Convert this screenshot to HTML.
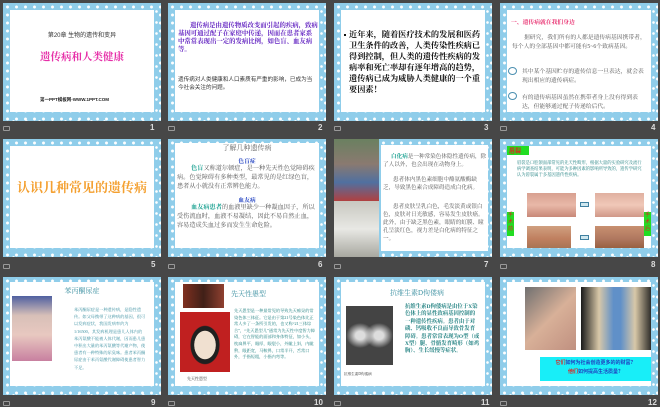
<!DOCTYPE html>
<html><head><meta charset="utf-8"><style>
*{margin:0;padding:0;box-sizing:border-box}
body{width:660px;height:406px;background:#474747;position:relative;overflow:hidden;font-family:"Liberation Sans","Noto Sans CJK SC",sans-serif}
.s{position:absolute;width:158px;height:118px;background-color:#8fcdea;
background-image:radial-gradient(circle,#fff 1.2px,transparent 1.8px),radial-gradient(circle,#fff 1px,transparent 1.6px);
background-size:9px 8px,13px 11px;background-position:0 0,4px 3px}
.in{position:absolute;left:7px;top:7px;right:7px;bottom:9px;background:#fff;overflow:hidden}
.n{position:absolute;color:#ddd;font-size:8px;font-weight:bold}
.ic{position:absolute;width:7px;height:5px;border:1px solid #999;border-radius:1px}
.t{position:absolute;font-family:"Liberation Serif","Noto Serif CJK SC",serif}
.p{position:absolute}
</style></head><body>

<!-- Row 1 -->
<div class="s" style="left:3px;top:3px"><div class="in">
<div class="t" style="left:0;right:0;top:20px;text-align:center;font-size:6px;color:#333;font-family:'Liberation Sans','Noto Sans CJK SC',sans-serif">第20章 生物的遗传和变异</div>
<div class="t" style="left:0;right:0;top:39px;text-align:center;font-size:10.5px;color:#e62fa8;font-weight:bold">遗传病和人类健康</div>
<div class="p" style="left:30px;top:87px;font-size:4.5px;color:#222;font-weight:bold">第一PPT模板网-WWW.1PPT.COM</div>
</div></div>
<div class="s" style="left:168px;top:3px"><div class="in">
<div class="t" style="left:3px;right:1px;top:12px;font-size:6.4px;line-height:8px;color:#6020c0;font-weight:bold;text-indent:12px">遗传病是由遗传物质改变而引起的疾病，致病基因可通过配子在家庭中传递，因而在患者家系中常常表现出一定的发病比例，如色盲、血友病等。</div>
<div class="p" style="left:3px;right:2px;top:66px;font-size:5.6px;line-height:8px;color:#333">遗传病对人类健康和人口素质有严重的影响，已成为当今社会关注的问题。</div>
</div></div>
<div class="s" style="left:334px;top:3px"><div class="in">
<div class="t" style="left:8px;right:3px;top:19px;font-size:8.2px;line-height:11px;color:#111;font-weight:bold">近年来，随着医疗技术的发展和医药卫生条件的改善，人类传染性疾病已得到控制，但人类的遗传性疾病的发病率和死亡率却有逐年增高的趋势，遗传病已成为威胁人类健康的一个重要因素！</div>
<div class="p" style="left:3px;top:24px;width:2px;height:2px;background:#111"></div>
</div></div>
<div class="s" style="left:500px;top:3px"><div class="in">
<div class="t" style="left:4px;top:7px;font-size:5.8px;color:#e83070;font-weight:bold">一、遗传病就在我们身边</div>
<div class="t" style="left:5px;right:2px;top:24px;font-size:5.8px;line-height:8.5px;color:#555;text-indent:12px">据研究，我们所有的人都是遗传病基因携带者，每个人的全部基因中都可能有5~6个致病基因。</div>
<div class="p" style="left:1px;top:57px;width:9px;height:8px;border:1px solid #4a8fb0;border-radius:50%"></div>
<div class="t" style="left:15px;right:2px;top:58px;font-size:5.8px;line-height:8.5px;color:#555">其中某个基因贮存的遗传信息一旦表达，就会表现出相应的遗传病症。</div>
<div class="p" style="left:1px;top:82px;width:9px;height:8px;border:1px solid #4a8fb0;border-radius:50%"></div>
<div class="t" style="left:15px;right:2px;top:84px;font-size:5.8px;line-height:8.5px;color:#555">有的遗传病基因虽然在携带者身上没有得到表达，但能够通过配子传递给后代。</div>
</div></div>

<!-- Row 2 -->
<div class="s" style="left:3px;top:139px"><div class="in">
<div class="t" style="left:0;right:0;top:31px;text-align:center;font-size:13px;color:#f4a030;font-weight:bold">认识几种常见的遗传病</div>
</div></div>
<div class="s" style="left:168px;top:139px"><div class="in" style="top:4px">
<div class="t" style="left:0;right:0;top:0;text-align:center;font-size:7px;color:#666">了解几种遗传病</div>
<div class="t" style="left:0;right:0;top:13px;text-align:center;font-size:5.8px;color:#2040c0;font-weight:bold">色盲症</div>
<div class="t" style="left:2px;right:1px;top:21px;font-size:6.2px;line-height:9px;color:#555;text-indent:14px"><b style="color:#18a090">色盲</b>又称道尔顿症，是一种先天性色觉障碍疾病。色觉障碍有多种类型，最常见的是红绿色盲，患者从小就没有正常辨色能力。</div>
<div class="t" style="left:0;right:0;top:52px;text-align:center;font-size:5.8px;color:#2040c0;font-weight:bold">血友病</div>
<div class="t" style="left:2px;right:1px;top:60px;font-size:6.2px;line-height:9px;color:#555;text-indent:14px"><b style="color:#18a090">血友病患者</b>的血液里缺少一种凝血因子，所以受伤流血时，血液不易凝结，因此不易自然止血，容易造成失血过多而发生生命危险。</div>
</div></div>
<div class="s" style="left:334px;top:139px">
<div class="p" style="left:0;top:0;width:45px;height:62px;background:linear-gradient(#6a8060,#8a7a70 40%,#5070a0 70%,#b04040)"></div>
<div class="p" style="left:0;top:62px;width:45px;height:56px;background:linear-gradient(#c8c8c0,#e8e8e4 50%,#a8a8a0)"></div>
<div class="in" style="left:47px;top:6px;right:4px;bottom:6px">
<div class="t" style="left:2px;right:1px;top:8px;font-size:5.6px;line-height:8px;color:#555;text-indent:8px"><b style="color:#18a090">白化病</b>是一种常染色体隐性遗传病，除了人以外，也会出现在动物身上。</div>
<div class="t" style="left:2px;right:1px;top:31px;font-size:5.6px;line-height:8px;color:#555;text-indent:10px">患者体内黑色素细胞中酪氨酸酶缺乏，导致黑色素合成障碍造成白化病。</div>
<div class="t" style="left:2px;right:1px;top:58px;font-size:5.6px;line-height:8px;color:#555;text-indent:10px">患者皮肤呈乳白色，毛发淡黄或银白色，皮肤对日光敏感，容易发生皮肤癌。此外，由于缺乏黑色素，眼睛的虹膜、瞳孔呈淡红色，视力差是白化病的特征之一。</div>
</div></div>
<div class="s" style="left:500px;top:139px"><div class="in">
<div class="p" style="left:0;top:0;width:22px;height:9px;background:#22dd22;color:#e02020;font-size:6px;font-weight:bold;padding-left:2px">唇裂</div>
<div class="t" style="left:10px;right:6px;top:14px;font-size:4.3px;line-height:5.8px;color:#208080">唇裂是口腔颌面部常见的先天性畸形，根据大量的实验研究及流行病学调查结果表明，可能为多种因素的影响所导致的，遗传学研究认为唇裂属于多基因遗传性疾病。</div>
<div class="p" style="left:20px;top:47px;width:49px;height:24px;background:linear-gradient(#d8a090,#e8b8a8 50%,#c88878)"></div>
<div class="p" style="left:88px;top:47px;width:49px;height:24px;background:linear-gradient(#e0b0a0,#f0c8b8 50%,#d09888)"></div>
<div class="p" style="left:20px;top:80px;width:44px;height:25px;background:linear-gradient(#d0a080,#c08060 50%,#a07050)"></div>
<div class="p" style="left:88px;top:80px;width:49px;height:25px;background:linear-gradient(#c89070,#b07860 50%,#905838)"></div>
<div class="p" style="left:73px;top:56px;width:9px;height:5px;border:1px solid #4080a0;background:#d0e8f0"></div>
<div class="p" style="left:73px;top:89px;width:9px;height:5px;border:1px solid #4080a0;background:#d0e8f0"></div>
<div class="p" style="left:0;top:66px;width:7px;height:24px;background:#22dd22;color:#e02020;font-size:5px;line-height:7px;text-align:center">手术前</div>
<div class="p" style="left:137px;top:66px;width:7px;height:24px;background:#22dd22;color:#e02020;font-size:5px;line-height:7px;text-align:center">手术后</div>
</div></div>

<!-- Row 3 -->
<div class="s" style="left:3px;top:277px"><div class="in" style="top:5px">
<div class="t" style="left:0;right:0;top:4px;text-align:center;font-size:7px;color:#3a8fa0">苯丙酮尿症</div>
<div class="p" style="left:2px;top:14px;width:40px;height:65px;background:linear-gradient(#5060a0,#d8c0b8 30%,#e8c8c0 60%,#c880a0)"></div>
<div class="t" style="left:64px;right:8px;top:24px;font-size:4.2px;line-height:7.2px;color:#3a8fa0">苯丙酮尿症是一种遗传病，是隐性遗传。如父母携带了这种病的基因，很可以发病症状，我国发病率约为1/16500。其发病机理是患儿人体内的苯丙氨酸不能被人体代谢，因而患儿患中积出大量的苯丙氨酸等代谢产物，使患者有一种特殊的尿臭味。患者苯丙酮尿症由于苯丙氨酸代谢障碍使患者智力不足。</div>
</div></div>
<div class="s" style="left:168px;top:277px"><div class="in" style="top:5px">
<div class="p" style="left:8px;top:2px;width:41px;height:24px;background:linear-gradient(90deg,#803020,#402018 50%,#904030)"></div>
<div class="t" style="left:56px;top:7px;font-size:7px;color:#3a8fa0">先天性愚型</div>
<div class="p" style="left:5px;top:30px;width:50px;height:60px;background:radial-gradient(ellipse at 50% 55%,#f0e0d0 30%,#202020 31%,#202020 40%,#c02020 42%)"></div>
<div class="t" style="left:12px;top:94px;font-size:4px;color:#333">先天性愚型</div>
<div class="t" style="left:59px;right:2px;top:26px;font-size:4.2px;line-height:6.6px;color:#208080">先天愚型是一种最常见的导致先天痴呆的常染色体三体征。它是由于第21号染色体比正常人多了一条所引发的，也又称“21三体综合”，“先天愚型儿”通常为先天性中度智力障碍，它在智能的面部和身体特征，如小头，枕扁鼻平，眼厚，眼裂小，外眦上斜，内眦赘，眼距宽，马鞍鼻，口常半开，舌常口外，手指短粗，小指内弯等。</div>
</div></div>
<div class="s" style="left:334px;top:277px"><div class="in" style="top:5px">
<div class="t" style="left:0;right:0;top:6px;text-align:center;font-size:7px;color:#3a8fa0;padding-left:8px">抗维生素D佝偻病</div>
<div class="p" style="left:5px;top:24px;width:47px;height:59px;background:radial-gradient(ellipse at 30% 50%,#ddd 10%,transparent 30%),radial-gradient(ellipse at 70% 50%,#ddd 10%,transparent 30%),#444"></div>
<div class="t" style="left:3px;top:90px;font-size:3.6px;color:#333">抗维生素D佝偻病</div>
<div class="t" style="left:64px;right:5px;top:22px;font-size:5.4px;line-height:7.4px;color:#208080;font-weight:bold">抗维生素D佝偻病是由位于X染色体上的显性致病基因控制的一种遗传性疾病。患者由于对磷、钙吸收不良而导致骨发育障碍。患者常常表现为O型（或X型）腿、骨骼发育畸形（如鸡胸）、生长缓慢等症状。</div>
</div></div>
<div class="s" style="left:500px;top:277px"><div class="in" style="top:5px">
<div class="p" style="left:18px;top:5px;width:51px;height:63px;background:linear-gradient(135deg,#707070,#d8b098 50%,#c09080)"></div>
<div class="p" style="left:74px;top:5px;width:72px;height:63px;background:linear-gradient(90deg,#1a1a1a,#d8c8a8 25%,#6090c8 45%,#6090c8 55%,#d8c8a8 75%,#1a1a1a)"></div>
<div class="p" style="left:33px;top:75px;width:111px;height:24px;background:#18eef8;font-size:5px;line-height:9px;font-weight:bold;color:#2040c0;text-align:center;padding-top:2px"><span style="color:#e02020">它们</span>如何为社会创造更多的的财富？<br><span style="color:#e02020">他们</span>如何提高生活质量？</div>
</div></div>

<!-- labels -->
<div class="ic" style="left:3px;top:126px"></div><div class="n" style="left:150px;top:123px">1</div>
<div class="ic" style="left:168px;top:126px"></div><div class="n" style="left:318px;top:123px">2</div>
<div class="ic" style="left:334px;top:126px"></div><div class="n" style="left:484px;top:123px">3</div>
<div class="ic" style="left:500px;top:126px"></div><div class="n" style="left:651px;top:123px">4</div>
<div class="ic" style="left:3px;top:264px"></div><div class="n" style="left:151px;top:260px">5</div>
<div class="ic" style="left:168px;top:264px"></div><div class="n" style="left:318px;top:260px">6</div>
<div class="ic" style="left:334px;top:264px"></div><div class="n" style="left:484px;top:260px">7</div>
<div class="ic" style="left:500px;top:264px"></div><div class="n" style="left:651px;top:260px">8</div>
<div class="ic" style="left:3px;top:401px"></div><div class="n" style="left:151px;top:398px">9</div>
<div class="ic" style="left:168px;top:401px"></div><div class="n" style="left:314px;top:398px">10</div>
<div class="ic" style="left:334px;top:401px"></div><div class="n" style="left:481px;top:398px">11</div>
<div class="ic" style="left:500px;top:401px"></div><div class="n" style="left:648px;top:398px">12</div>
</body></html>
